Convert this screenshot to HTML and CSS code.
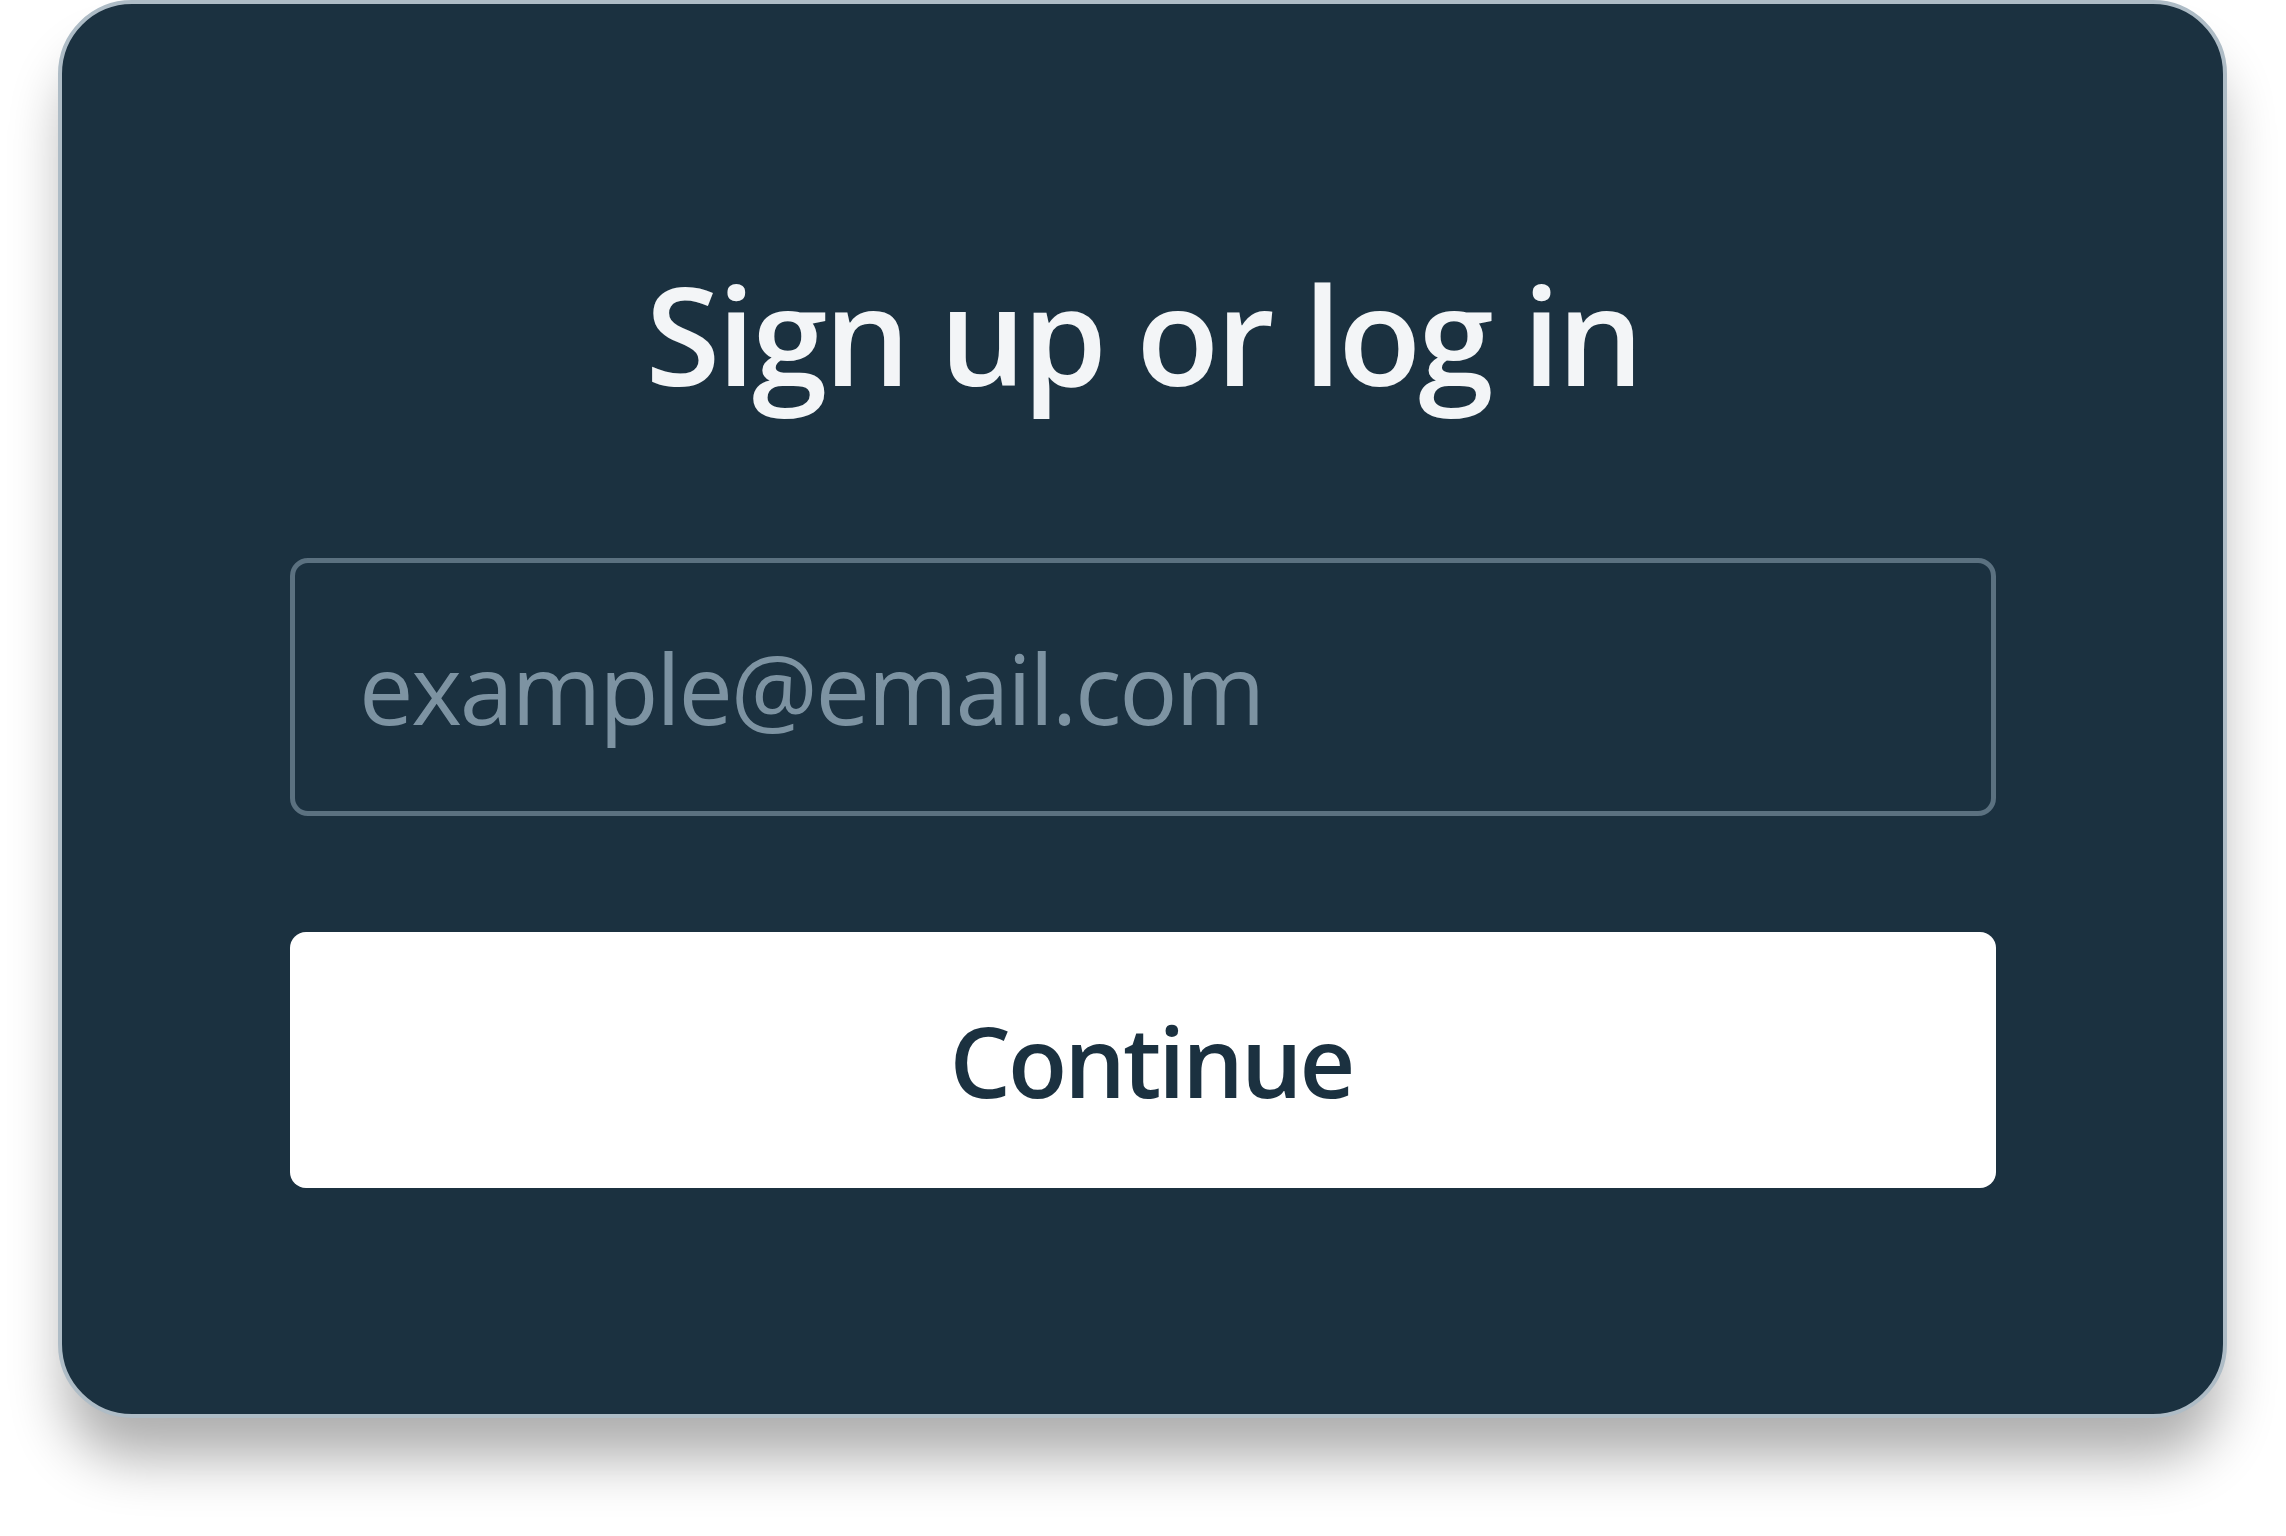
FILE: index.html
```html
<!DOCTYPE html>
<html lang="en">
<head>
<meta charset="utf-8">
<title>Sign up or log in</title>
<link rel="stylesheet" href="styles.css">
</head>
<body>
<main class="card">
  <h1 class="title">Sign up or log in</h1>
  <form class="form">
    <input class="email" type="email" placeholder="example@email.com">
    <button class="continue" type="button">Continue</button>
  </form>
</main>
</body>
</html>
```

FILE: styles.css
```css
html, body {
  margin: 0;
  padding: 0;
  background: #ffffff;
}
body {
  width: 2286px;
  height: 1536px;
  overflow: hidden;
  font-family: "Open Sans", "Noto Sans", sans-serif;
}
.card {
  box-sizing: border-box;
  margin-left: 58px;
  width: 2169px;
  height: 1418px;
  border: 4px solid #aebcc6;
  border-radius: 74px;
  background: #1b3140;
  padding: 262px 227px 226px 228px;
  display: flex;
  flex-direction: column;
  box-shadow: 0 48px 56px -8px rgba(0, 0, 0, 0.32);
}
.title {
  margin: 0;
  font-size: 136px;
  line-height: 136px;
  height: 136px;
  font-weight: 600;
  color: #f3f5f7;
  text-align: center;
  letter-spacing: -3.2px;
}
.form {
  margin-top: 156px;
  display: flex;
  flex-direction: column;
  gap: 116px;
}
.email {
  box-sizing: border-box;
  width: 100%;
  height: 258px;
  margin: 0;
  border: 5px solid #5b7180;
  border-radius: 18px;
  background: transparent;
  padding: 0 0 0 64px;
  font-family: "Open Sans", "Noto Sans", sans-serif;
  font-size: 97px;
  font-weight: 400;
  letter-spacing: -2.2px;
  color: #e6ecf0;
  outline: none;
}
.email::placeholder {
  color: #7d93a2;
  opacity: 1;
}
.continue {
  box-sizing: border-box;
  width: 100%;
  height: 256px;
  margin: 0;
  border: 0;
  border-radius: 16px;
  background: #ffffff;
  color: #1b3140;
  font-family: "Open Sans", "Noto Sans", sans-serif;
  font-size: 97px;
  font-weight: 600;
  letter-spacing: -3px;
  padding: 0 0 0 16px;
  cursor: pointer;
}
```
